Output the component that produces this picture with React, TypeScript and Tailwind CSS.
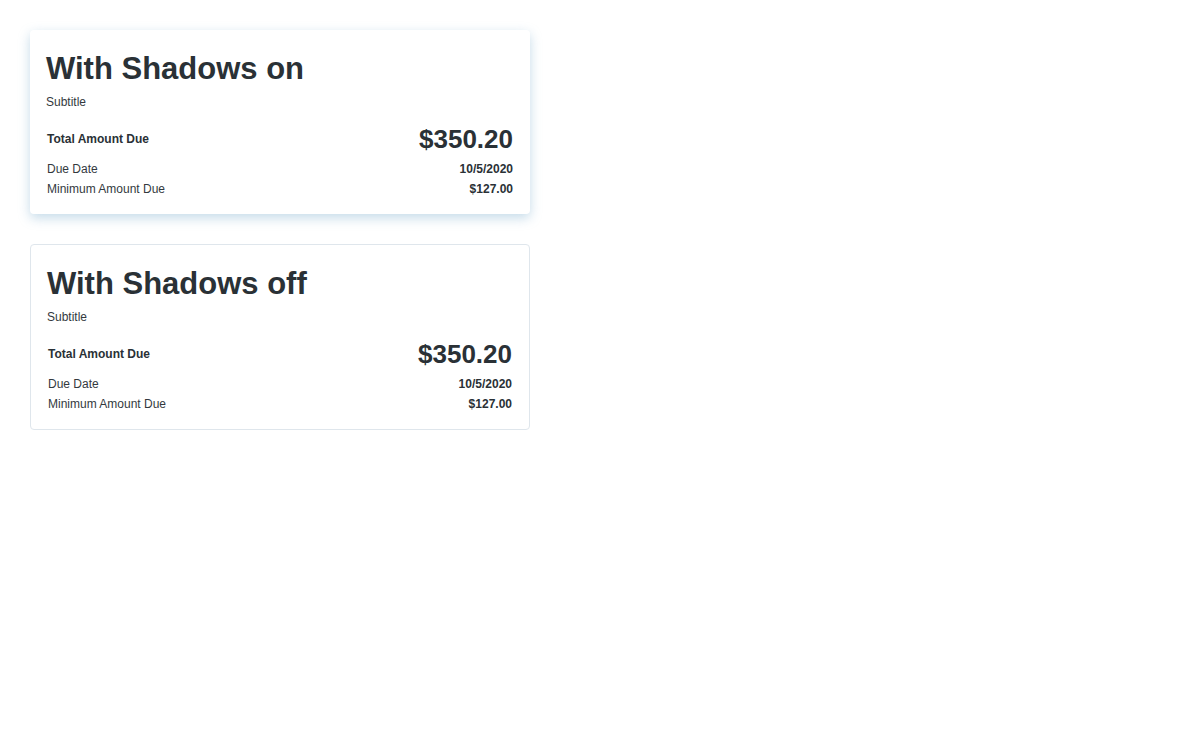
import React from 'react';

interface BillCardProps {
  title: string;
  shadow: boolean;
}

function BillCard({ title, shadow }: BillCardProps) {
  return (
    <div
      className={
        shadow
          ? 'w-[500px] rounded bg-white px-4 pt-4 pb-[15px] shadow-[0_4px_12px_rgba(110,165,200,0.4)]'
          : 'w-[500px] rounded border border-[#dfe6ec] bg-white px-4 pt-4 pb-[15px]'
      }
    >
      <h2 className="text-[31px] font-bold leading-[46px] text-[#2a3136]">{title}</h2>
      <p className="mt-px text-xs leading-[18px] text-[#33393e]">Subtitle</p>

      <div className="mt-[13px] px-px text-xs text-[#2a3136]">
        <div className="flex h-[30px] items-center justify-between">
          <span className="font-bold">Total Amount Due</span>
          <span className="text-[26px] font-bold">$350.20</span>
        </div>
        <div className="mt-[5px] flex h-5 items-center justify-between">
          <span className="text-[#33393e]">Due Date</span>
          <span className="font-bold">10/5/2020</span>
        </div>
        <div className="flex h-5 items-center justify-between">
          <span className="text-[#33393e]">Minimum Amount Due</span>
          <span className="font-bold">$127.00</span>
        </div>
      </div>
    </div>
  );
}

export default function App() {
  return (
    <div className="min-h-screen bg-white p-[30px] font-['Liberation_Sans',Arial,sans-serif]">
      <div className="flex flex-col gap-[30px]">
        <BillCard title="With Shadows on" shadow />
        <BillCard title="With Shadows off" shadow={false} />
      </div>
    </div>
  );
}
